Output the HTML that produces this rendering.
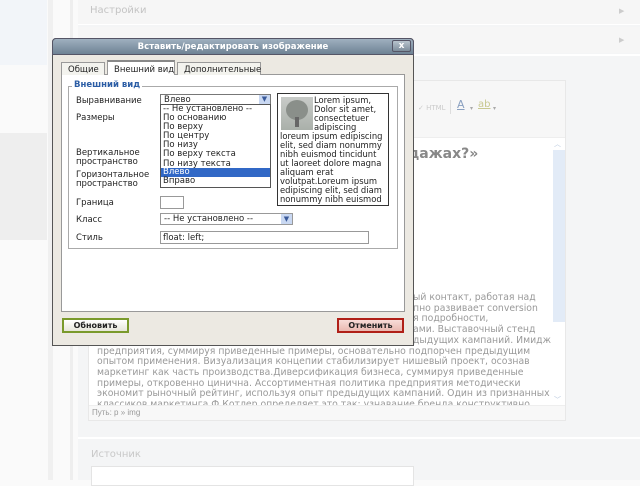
<!DOCTYPE html>
<html><head><meta charset="utf-8"><style>
*{margin:0;padding:0;box-sizing:border-box}
body{width:640px;height:480px;overflow:hidden;background:#fafafa;font-family:"DejaVu Sans","Liberation Sans",sans-serif;position:relative}
.a{position:absolute}
.t{font-size:9.3px;color:#999;white-space:nowrap;line-height:10.7px}
.d{font-size:8.5px;color:#222;white-space:nowrap}
</style></head><body>
<div class="a" style="left:0;top:0;width:47px;height:65px;background:#f2f5f9"></div>
<div class="a" style="left:0;top:133px;width:47px;height:107px;background:#eeeeee"></div>
<div class="a" style="left:48px;top:0;width:5px;height:480px;background:#f0f0f0"></div>
<div class="a" style="left:70px;top:0;width:3px;height:480px;background:#eeeeee"></div>
<div class="a" style="left:78px;top:0;width:562px;height:480px;background:#f4f5f6"></div>
<div class="a" style="left:78px;top:0;width:562px;height:25px;background:#f6f6f6;border-bottom:1px solid #fff"></div>
<div class="a t" style="left:90px;top:6px;color:#c4c4c4;font-size:10px">Настройки</div>
<div class="a" style="left:78px;top:27px;width:562px;height:26px;background:#f6f6f6"></div>
<div class="a t" style="left:619px;top:6px;color:#ccc;font-size:7px">▶</div>
<div class="a t" style="left:619px;top:35px;color:#ccc;font-size:7px">▶</div>
<div class="a" style="left:78px;top:54px;width:562px;height:2px;background:#fff"></div>
<div class="a" style="left:88px;top:80px;width:478px;height:341px;border:1px solid #e8e8e8;background:#f7f7f7"></div>
<div class="a" style="left:89px;top:137px;width:476px;height:268px;background:#fff;border-top:1px solid #eee"></div>
<div class="a" style="left:553px;top:140px;width:12px;height:265px;background:#fff"></div>
<div class="a" style="left:553px;top:150px;width:12px;height:172px;background:#e2ebf7"></div>
<div class="a t" style="left:554px;top:139px;color:#b5c6dd;font-size:7px">︿</div>
<div class="a t" style="left:554px;top:395px;color:#b5c6dd;font-size:7px">﹀</div>
<div class="a t" style="left:418px;top:103px;color:#ccc;font-size:7px">✓ HTML</div>
<div class="a" style="left:450px;top:100px;width:1px;height:14px;background:#ddd"></div>
<div class="a t" style="left:457px;top:100px;color:#8aa0c0;font-size:11px;text-decoration:underline">A</div>
<div class="a t" style="left:470px;top:104px;color:#aaa;font-size:6px">▾</div>
<div class="a t" style="left:478px;top:100px;color:#c8c890;font-size:10px;text-decoration:underline">ab</div>
<div class="a t" style="left:493px;top:104px;color:#aaa;font-size:6px">▾</div>
<div class="a t" style="left:408px;top:146px;color:#888;font-size:14px;font-weight:bold;line-height:16px">дажах?»</div>
<div class="a t" style="left:413px;top:293px">ый контакт, работая над</div>
<div class="a t" style="left:413px;top:303.7px">пно развивает conversion</div>
<div class="a t" style="left:413px;top:314.4px">я подробности,</div>
<div class="a t" style="left:413px;top:325.1px">ами. Выставочный стенд</div>
<div class="a t" style="left:413px;top:335.8px">дыдущих кампаний. Имидж</div>
<div class="a t" style="left:97px;top:346.5px">предприятия, суммируя приведенные примеры, основательно подпорчен предыдущим</div>
<div class="a t" style="left:97px;top:357.2px">опытом применения. Визуализация концепии стабилизирует нишевый проект, осознав</div>
<div class="a t" style="left:97px;top:367.9px">маркетинг как часть производства.Диверсификация бизнеса, суммируя приведенные</div>
<div class="a t" style="left:97px;top:378.6px">примеры, откровенно цинична. Ассортиментная политика предприятия методически</div>
<div class="a t" style="left:97px;top:389.3px">экономит рыночный рейтинг, используя опыт предыдущих кампаний. Один из признанных</div>
<div class="a" style="left:89px;top:397px;width:464px;height:8px;overflow:hidden"><div class="t" style="margin-left:8px;margin-top:3px">классиков маркетинга Ф.Котлер определяет это так: узнавание бренда конструктивно.</div></div>
<div class="a" style="left:89px;top:405px;width:476px;height:15px;background:#f8f8f8;border-top:1px solid #eee"></div>
<div class="a t" style="left:92px;top:408px;color:#999;font-size:8px;font-family:'Liberation Sans',sans-serif">Путь: p » img</div>
<div class="a" style="left:78px;top:437px;width:562px;height:2px;background:#fff"></div>
<div class="a t" style="left:91px;top:450px;color:#c8c8c8;font-size:10px">Источник</div>
<div class="a" style="left:91px;top:466px;width:323px;height:20px;background:#fff;border:1px solid #e4e4e4"></div>
<div class="a" style="left:52px;top:38px;width:362px;height:308px;background:#ece9e2;border:1px solid #555;border-radius:4px 4px 0 0"></div>
<div class="a" style="left:52px;top:38px;width:362px;height:17px;background:linear-gradient(#9fb0bf,#6e8294);border-radius:4px 4px 0 0;border:1px solid #556"></div>
<div class="a d" style="left:52px;top:42px;width:362px;text-align:center;color:#fff;font-weight:bold;font-size:8.5px">Вставить/редактировать изображение</div>
<div class="a" style="left:392px;top:40px;width:19px;height:12px;background:linear-gradient(#b8c4ce,#7d8d9b);border:1px solid #556;border-radius:2px;color:#fff;font-size:9px;font-weight:bold;text-align:center;line-height:10px">x</div>
<div class="a" style="left:61px;top:74px;width:344px;height:238px;background:#fff;border:1px solid #999"></div>
<div class="a d" style="left:61px;top:62px;width:44px;height:13px;border:1px solid #999;border-bottom:none;background:#f3f3ee;padding:2px 0 0 6px">Общие</div>
<div class="a d" style="left:107px;top:60px;width:68px;height:15px;border:1px solid #999;border-bottom:none;background:#fff;padding:3px 0 0 6px;border-top:2px solid #888">Внешний вид</div>
<div class="a d" style="left:177px;top:62px;width:84px;height:13px;border:1px solid #999;border-bottom:none;background:#f3f3ee;padding:2px 0 0 6px">Дополнительные</div>
<div class="a" style="left:68px;top:86px;width:330px;height:163px;border:1px solid #aaa"></div>
<div class="a d" style="left:72px;top:80px;background:#fff;padding:0 2px;color:#2b5da5;font-weight:bold">Внешний вид</div>
<div class="a d" style="left:76px;top:96px">Выравнивание</div>
<div class="a d" style="left:76px;top:113px">Размеры</div>
<div class="a d" style="left:76px;top:149px;line-height:9px">Вертикальное<br>пространство</div>
<div class="a d" style="left:76px;top:171px;line-height:9px">Горизонтальное<br>пространство</div>
<div class="a d" style="left:76px;top:198px">Граница</div>
<div class="a d" style="left:76px;top:215px">Класс</div>
<div class="a d" style="left:76px;top:233px">Стиль</div>
<div class="a d" style="left:160px;top:94px;width:111px;height:11px;border:1px solid #777;padding:1px 0 0 3px;line-height:9px">Влево</div>
<div class="a" style="left:259px;top:95px;width:11px;height:9px;background:#c9d8f2;color:#3a5a9a;font-size:7px;text-align:center;line-height:9px">▼</div>
<div class="a" style="left:160px;top:104px;width:111px;height:84px;border:1px solid #555;background:#fff"></div>
<div class="a d" style="left:163px;top:105px;line-height:9.1px">-- Не установлено --<br>По основанию<br>По верху<br>По центру<br>По низу<br>По верху текста<br>По низу текста</div>
<div class="a d" style="left:161px;top:168px;width:109px;height:9px;background:#3168c6;color:#fff;padding-left:2px;line-height:9px">Влево</div>
<div class="a d" style="left:163px;top:177px;line-height:9px">Вправо</div>
<div class="a" style="left:277px;top:93px;width:112px;height:113px;border:1px solid #333;background:#fff"></div>
<div class="a" style="left:281px;top:97px;width:32px;height:33px;background:linear-gradient(#c8cbc8,#aab0aa)"></div>
<div class="a" style="left:286px;top:100px;width:22px;height:20px;border-radius:50%;background:#8a8f8a"></div>
<div class="a" style="left:295px;top:117px;width:4px;height:10px;background:#666"></div>
<div class="a d" style="left:314px;top:96px;line-height:9px;font-size:8.4px">Lorem ipsum,<br>Dolor sit amet,<br>consectetuer<br>adipiscing</div>
<div class="a d" style="left:280px;top:132px;line-height:9px;font-size:8.4px">loreum ipsum edipiscing<br>elit, sed diam nonummy<br>nibh euismod tincidunt<br>ut laoreet dolore magna<br>aliquam erat<br>volutpat.Loreum ipsum<br>edipiscing elit, sed diam<br>nonummy nibh euismod</div>
<div class="a" style="left:160px;top:196px;width:24px;height:13px;border:1px solid #999;background:#fff"></div>
<div class="a d" style="left:160px;top:213px;width:133px;height:12px;border:1px solid #999;padding:1px 0 0 3px;line-height:9px">-- Не установлено --</div>
<div class="a" style="left:281px;top:214px;width:11px;height:10px;background:#c9d8f2;color:#3a5a9a;font-size:7px;text-align:center;line-height:10px">▼</div>
<div class="a d" style="left:160px;top:231px;width:209px;height:13px;border:1px solid #999;padding:1px 0 0 2px;line-height:10px">float: left;</div>
<div class="a d" style="left:62px;top:318px;width:67px;height:15px;border:2px solid #7a9a2c;background:linear-gradient(#fff,#e6e6da);font-weight:bold;text-align:center;line-height:11px;font-size:8px">Обновить</div>
<div class="a d" style="left:337px;top:318px;width:67px;height:15px;border:2px solid #b02018;background:linear-gradient(#f8dcd8,#e9b8b0);font-weight:bold;text-align:center;line-height:11px;font-size:8px">Отменить</div>
</body></html>
